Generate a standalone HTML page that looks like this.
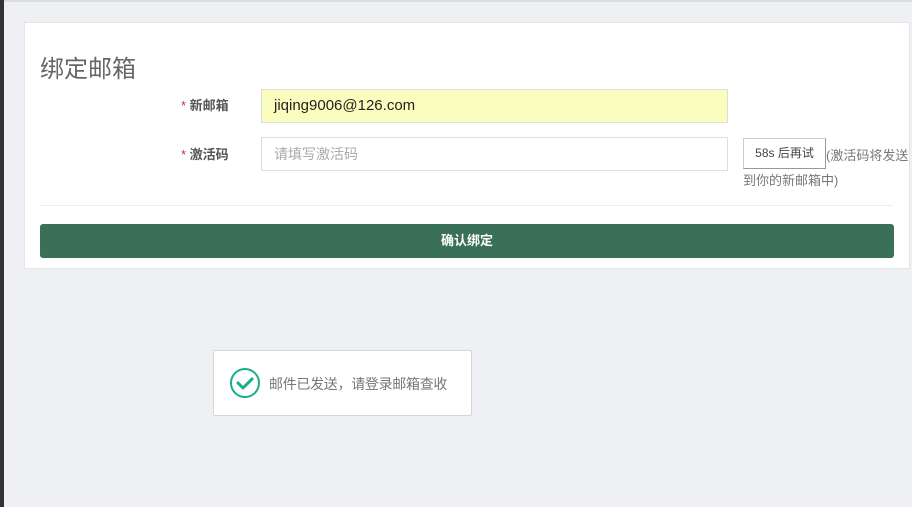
<!DOCTYPE html>
<html><head><meta charset="utf-8"><style>
*{margin:0;padding:0;box-sizing:border-box}
body{width:912px;height:507px;background:#eff0f4;position:relative;overflow:hidden;font-family:"Liberation Sans","Noto Sans CJK SC",sans-serif}
.side{position:absolute;left:0;top:0;width:4px;height:507px;background:#333}
.top{position:absolute;left:0;top:0;width:912px;height:2px;background:#ddd}
.card{position:absolute;left:24px;top:22px;width:886px;height:247px;background:#fff;border:1px solid #e4e4e4}
.abs{position:absolute}
h1{position:absolute;left:15px;top:26px;font-size:24px;font-weight:normal;color:#666}
.lbl{font-size:13px;font-weight:bold;color:#555}
.lbl span{color:#c33;font-weight:normal}
.inp{border:1px solid #ddd;height:34px;font-size:15px;padding:0 12px;line-height:32px}
</style></head><body>
<div class="top"></div>
<div class="side"></div>
<div class="card">
<h1>绑定邮箱</h1>
<div class="abs lbl" style="left:156px;top:72px"><span>*</span> 新邮箱</div>
<div class="abs inp" style="left:236px;top:66px;width:467px;background:#fafdbd;color:#222">jiqing9006@126.com</div>
<div class="abs lbl" style="left:156px;top:121px"><span>*</span> 激活码</div>
<div class="abs inp" style="left:236px;top:114px;width:467px;color:#aaa;font-size:14px">请填写激活码</div>
<div class="abs" style="left:718px;top:115px;width:83px;height:31px;border:1px solid #ccc;border-right-color:#999;border-bottom-color:#999;font-size:12px;color:#444;text-align:center;line-height:29px">58s 后再试</div>
<div class="abs" style="left:801px;top:122px;font-size:13px;color:#777;white-space:nowrap">(激活码将发送</div>
<div class="abs" style="left:718px;top:147px;font-size:13px;color:#777">到你的新邮箱中)</div>
<div class="abs" style="left:15px;top:182px;width:853px;height:1px;background:#eee"></div>
<div class="abs" style="left:15px;top:201px;width:854px;height:34px;background:#3a7057;border-radius:3px;color:#fff;font-size:13px;font-weight:bold;text-align:center;line-height:34px">确认绑定</div>
</div>
<div class="abs" style="left:213px;top:350px;width:259px;height:66px;background:#fff;border:1px solid #d6d6d6;border-radius:2px">
<svg class="abs" style="left:15px;top:16px" width="32" height="32" viewBox="0 0 32 32"><circle cx="16" cy="16" r="14" fill="none" stroke="#1aad8a" stroke-width="2"/><path d="M9 16l5 5 9-9" fill="none" stroke="#1aad8a" stroke-width="3" stroke-linecap="round" stroke-linejoin="round"/></svg>
<div class="abs" style="left:55px;top:23px;font-size:14px;letter-spacing:-0.3px;color:#777;white-space:nowrap">邮件已发送，请登录邮箱查收</div>
</div>
</body></html>
